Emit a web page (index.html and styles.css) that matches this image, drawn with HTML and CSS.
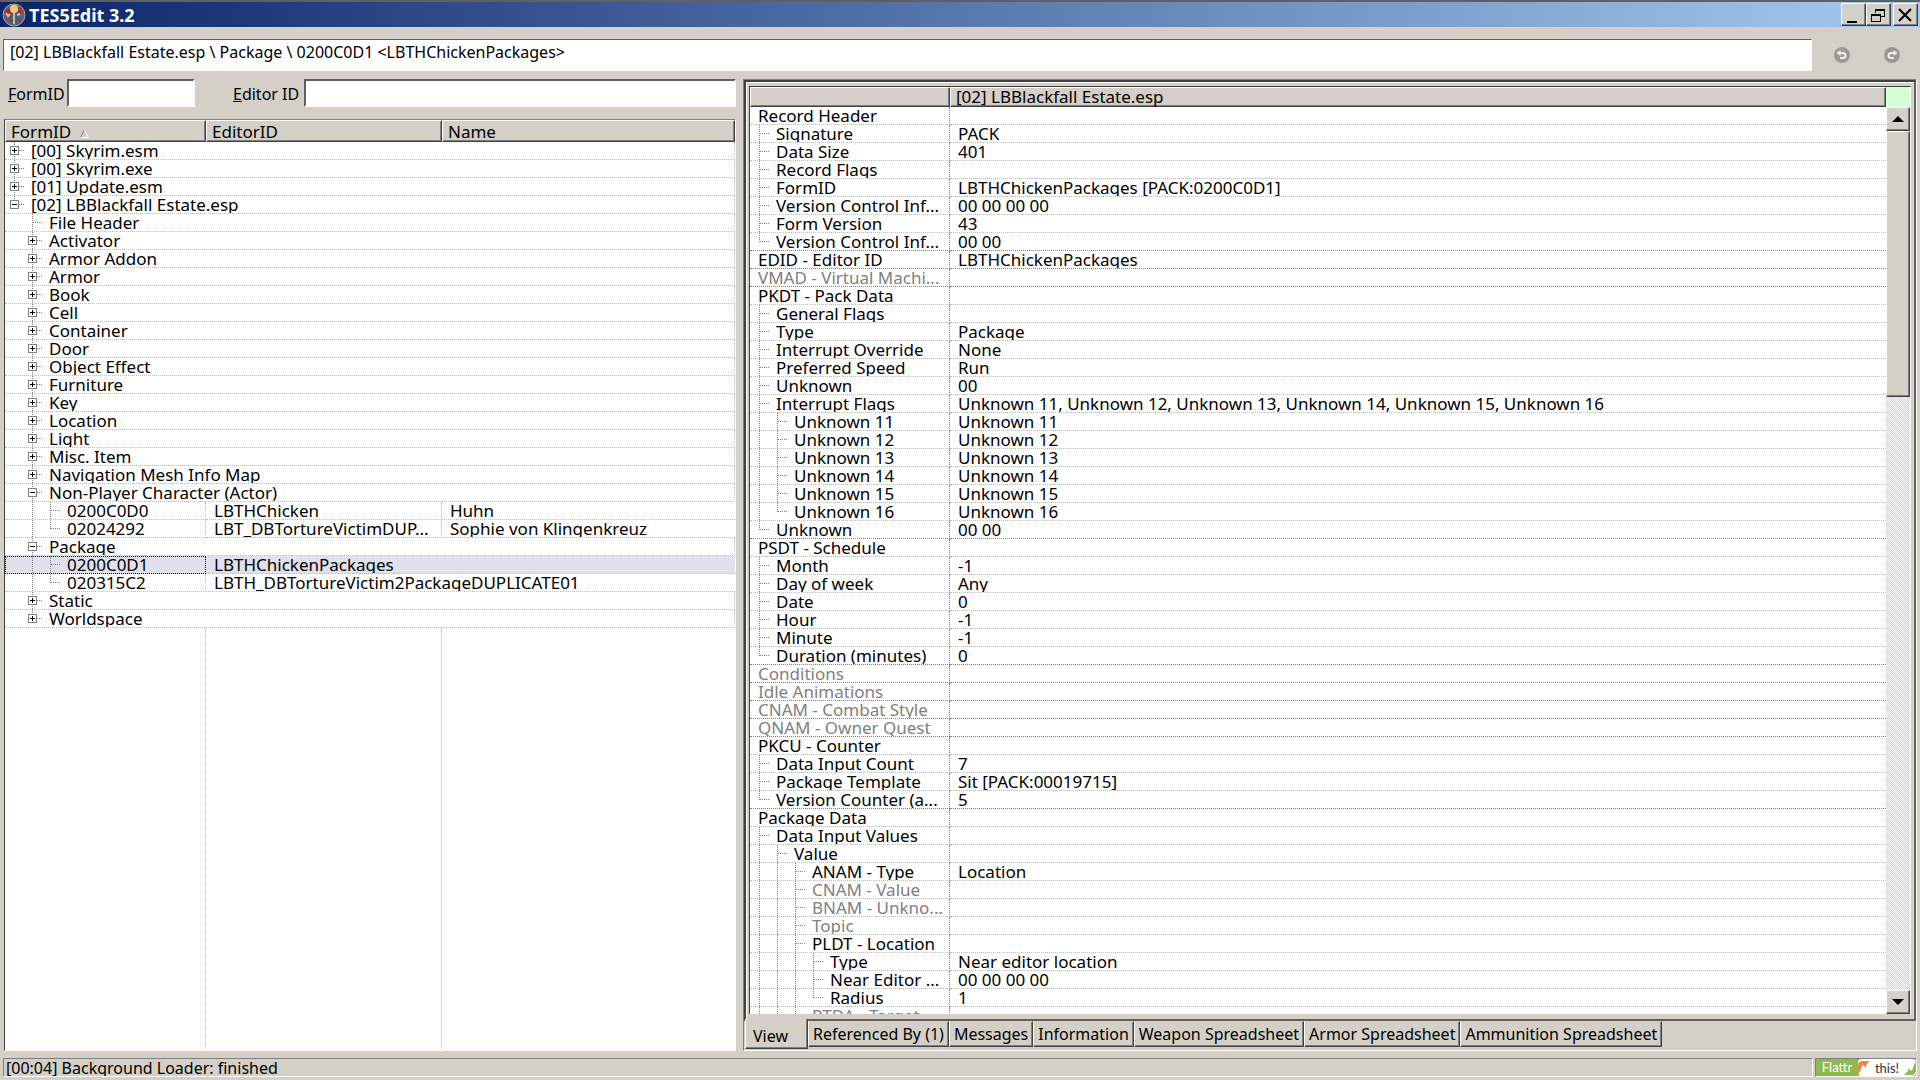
FILE: index.html
```html
<!DOCTYPE html>
<html lang="en">
<head>
    <meta charset="UTF-8">
    <meta name="viewport" content="width=device-width, initial-scale=1.0">
    <title>TES5Edit 3.2</title>
    <link rel="stylesheet" href="styles.css">
</head>
<body>
    <header class="titlebar">
        <svg class="app-icon" viewBox="0 0 24 24" aria-hidden="true">
            <circle cx="12" cy="12" r="11" fill="#5d6664" stroke="#a3a69b"/>
            <path d="M3 8l5-3 2 4-2 3 3 2-3 5-4-3z" fill="#b5222a"/>
            <path d="M14 6l5-1 2 5-4 2 3 3-2 4-4-2z" fill="#c02a2a"/>
            <path d="M3 12l4-1 2 4-3 3zM16 9l4 2-1 5-4-1z" fill="#3c6ea6"/>
            <path d="M9 10h6v11H9z" fill="#2f5f9c"/>
            <path d="M8 11l-2 2-2-3M15 12l3-1" stroke="#e0bd8d" stroke-width="2" fill="none"/>
            <circle cx="12" cy="6" r="4" fill="#e6c79a"/>
            <path d="M8 5c0-3 6-5 8-1l-3 0-4 2z" fill="#e2cf58"/>
            <path d="M12 10v11" stroke="#d9c65a" stroke-width="2"/>
        </svg>
        <h1>TES5Edit 3.2</h1>
        <div class="window-buttons">
            <button type="button" aria-label="Minimize">
                <svg viewBox="0 0 20 18"><path d="M4 15h10v2H4z"/></svg>
            </button>
            <button type="button" aria-label="Restore">
                <svg viewBox="0 0 20 18"><path d="M7 3h10v8h-4v-1h3V5H8v2H7zM3 8h10v8H3zM4 10v5h8v-5z" fill-rule="evenodd"/></svg>
            </button>
            <button type="button" class="close" aria-label="Close">
                <svg viewBox="0 0 20 18"><path d="M4 3l12 12M16 3L4 15" stroke="#000" stroke-width="2"/></svg>
            </button>
        </div>
    </header>

    <div class="path-bar">
        <input type="text" aria-label="Path" readonly value="[02] LBBlackfall Estate.esp \ Package \ 0200C0D1 &lt;LBTHChickenPackages&gt;">
        <button type="button" class="nav-button" aria-label="Back">
            <svg viewBox="0 0 16 16"><circle cx="8" cy="8" r="8" fill="#999"/><path d="M5 6h4a2.500 2.500 0 0 1 0 5H6" stroke="#eee" stroke-width="2" fill="none"/><path d="M2.500 6L6.500 3v6z" fill="#eee"/></svg>
        </button>
        <button type="button" class="nav-button" aria-label="Forward">
            <svg viewBox="0 0 16 16"><circle cx="8" cy="8" r="8" fill="#999"/><path d="M11 6H7a2.500 2.500 0 0 0 0 5h3" stroke="#eee" stroke-width="2" fill="none"/><path d="M13.500 6L9.500 3v6z" fill="#eee"/></svg>
        </button>
    </div>

    <main class="panes">
        <section class="nav-pane">
            <form class="search">
                <label for="form-id"><u>F</u>ormID</label>
                <input type="text" id="form-id" class="form-id">
                <label for="editor-id" class="editor-label"><u>E</u>ditor ID</label>
                <input type="text" id="editor-id" class="editor-id">
            </form>
            <div class="tree nav-tree">
                <table>
                    <colgroup><col class="col-form"><col class="col-editor"><col></colgroup>
                    <thead>
                        <tr>
                            <th>FormID <svg class="sort" viewBox="0 0 9 9"><path d="M4.500 0.500L0.500 8.500" stroke="#808080"/><path d="M4.500 0.500l4 8h-8" stroke="#fff" fill="none"/></svg></th>
                            <th>EditorID</th>
                            <th>Name</th>
                        </tr>
                    </thead>
                    <tbody id="nav-rows"></tbody>
                </table>
                <div class="empty"><span></span><span></span></div>
            </div>
        </section>

        <section class="view-pane">
            <div class="page">
                <div class="tree record-tree">
                    <table>
                        <colgroup><col class="col-label"><col></colgroup>
                        <thead>
                            <tr><th></th><th>[02] LBBlackfall Estate.esp</th></tr>
                        </thead>
                        <tbody id="record-rows"></tbody>
                    </table>
                </div>
                <div class="scroll">
                    <div class="corner"></div>
                    <button type="button" aria-label="Scroll up"><svg viewBox="0 0 12 6"><path d="M6 0l6 6H0z"/></svg></button>
                    <div class="track"><div class="thumb"></div></div>
                    <button type="button" aria-label="Scroll down"><svg viewBox="0 0 12 6"><path d="M0 0h12L6 6z"/></svg></button>
                </div>
            </div>
            <nav class="tabs">
                <button type="button" class="active">View</button>
                <button type="button">Referenced By (1)</button>
                <button type="button">Messages</button>
                <button type="button">Information</button>
                <button type="button">Weapon Spreadsheet</button>
                <button type="button">Armor Spreadsheet</button>
                <button type="button">Ammunition Spreadsheet</button>
            </nav>
        </section>
    </main>

    <footer class="statusbar">
        <div class="status">[00:04] Background Loader: finished</div>
        <a href="#" class="flattr">
            <span class="flattr-name">Flattr</span>
            <span class="flattr-this">
                <svg viewBox="0 0 12 14"><path d="M0 14V5Q0 0 5 0h7L8 4v3L5 4Q3 5 3 8z" fill="#f0883a"/></svg>
                this!
                <svg viewBox="0 0 12 14"><path d="M12 0v9q0 5-5 5H0l4-4V7l3 3q2-1 2-4z" fill="#8db94f"/></svg>
            </span>
        </a>
    </footer>

    <script>
        // level, state (+ closed, - open, . leaf), FormID, EditorID, Name
        const navRows = [
            [0, '+', '[00] Skyrim.esm'],
            [0, '+', '[00] Skyrim.exe'],
            [0, '+', '[01] Update.esm'],
            [0, '-', '[02] LBBlackfall Estate.esp'],
            [1, '.', 'File Header'],
            [1, '+', 'Activator'],
            [1, '+', 'Armor Addon'],
            [1, '+', 'Armor'],
            [1, '+', 'Book'],
            [1, '+', 'Cell'],
            [1, '+', 'Container'],
            [1, '+', 'Door'],
            [1, '+', 'Object Effect'],
            [1, '+', 'Furniture'],
            [1, '+', 'Key'],
            [1, '+', 'Location'],
            [1, '+', 'Light'],
            [1, '+', 'Misc. Item'],
            [1, '+', 'Navigation Mesh Info Map'],
            [1, '-', 'Non-Player Character (Actor)'],
            [2, '.', '0200C0D0', 'LBTHChicken', 'Huhn'],
            [2, '.', '02024292', 'LBT_DBTortureVictimDUP...', 'Sophie von Klingenkreuz'],
            [1, '-', 'Package'],
            [2, '.', '0200C0D1', 'LBTHChickenPackages'],
            [2, '.', '020315C2', 'LBTH_DBTortureVictim2PackageDUPLICATE01'],
            [1, '+', 'Static'],
            [1, '+', 'Worldspace']
        ];
        const selected = '0200C0D1';

        // level, label, value, unset
        const recordRows = [
            [0, 'Record Header'],
            [1, 'Signature', 'PACK'],
            [1, 'Data Size', '401'],
            [1, 'Record Flags'],
            [1, 'FormID', 'LBTHChickenPackages [PACK:0200C0D1]'],
            [1, 'Version Control Inf...', '00 00 00 00'],
            [1, 'Form Version', '43'],
            [1, 'Version Control Inf...', '00 00'],
            [0, 'EDID - Editor ID', 'LBTHChickenPackages'],
            [0, 'VMAD - Virtual Machi...', '', true],
            [0, 'PKDT - Pack Data'],
            [1, 'General Flags'],
            [1, 'Type', 'Package'],
            [1, 'Interrupt Override', 'None'],
            [1, 'Preferred Speed', 'Run'],
            [1, 'Unknown', '00'],
            [1, 'Interrupt Flags', 'Unknown 11, Unknown 12, Unknown 13, Unknown 14, Unknown 15, Unknown 16'],
            [2, 'Unknown 11', 'Unknown 11'],
            [2, 'Unknown 12', 'Unknown 12'],
            [2, 'Unknown 13', 'Unknown 13'],
            [2, 'Unknown 14', 'Unknown 14'],
            [2, 'Unknown 15', 'Unknown 15'],
            [2, 'Unknown 16', 'Unknown 16'],
            [1, 'Unknown', '00 00'],
            [0, 'PSDT - Schedule'],
            [1, 'Month', '-1'],
            [1, 'Day of week', 'Any'],
            [1, 'Date', '0'],
            [1, 'Hour', '-1'],
            [1, 'Minute', '-1'],
            [1, 'Duration (minutes)', '0'],
            [0, 'Conditions', '', true],
            [0, 'Idle Animations', '', true],
            [0, 'CNAM - Combat Style', '', true],
            [0, 'QNAM - Owner Quest', '', true],
            [0, 'PKCU - Counter'],
            [1, 'Data Input Count', '7'],
            [1, 'Package Template', 'Sit [PACK:00019715]'],
            [1, 'Version Counter (a...', '5'],
            [0, 'Package Data'],
            [1, 'Data Input Values'],
            [2, 'Value'],
            [3, 'ANAM - Type', 'Location'],
            [3, 'CNAM - Value', '', true],
            [3, 'BNAM - Unkno...', '', true],
            [3, 'Topic', '', true],
            [3, 'PLDT - Location'],
            [4, 'Type', 'Near editor location'],
            [4, 'Near Editor ...', '00 00 00 00'],
            [4, 'Radius', '1'],
            [3, 'PTDA - Target', '', true]
        ];

        // is there another node on this level under the same parent?
        function hasNext(rows, index, level, openEnd) {
            for (let i = index + 1; i < rows.length; i++) {
                if (rows[i][0] < level) return false;
                if (rows[i][0] === level) return true;
            }
            return openEnd;
        }

        function guides(rows, index, first, openEnd) {
            const level = rows[index][0];
            let html = '';
            for (let l = first; l <= level; l++) {
                const next = hasNext(rows, index, l, openEnd);
                let name = 'guide';
                if (next) name += ' line';
                else if (l === level) name += ' end';
                if (l === level) name += ' stub';
                html += `<span class="${name}"></span>`;
            }
            return html;
        }

        function renderNav() {
            document.getElementById('nav-rows').innerHTML = navRows.map((row, index) => {
                const [level, state, id, editor, name] = row;
                const box = state === '.' ? '' : `<span class="box ${state === '+' ? 'closed' : ''}"></span>`;
                const first = `<div class="cell">${guides(navRows, index, 0, false)}${box}<span class="text">${id}</span></div>`;
                if (!editor) return `<tr><td colspan="3" class="edge">${first}</td></tr>`;
                const rowClass = id === selected ? ' class="selected"' : '';
                const rest = name
                    ? `<td><div class="cell">${editor}</div></td><td><div class="cell">${name}</div></td>`
                    : `<td colspan="2"><div class="cell">${editor}</div></td>`;
                return `<tr${rowClass}><td>${first}</td>${rest}</tr>`;
            }).join('');
        }

        function renderRecord() {
            document.getElementById('record-rows').innerHTML = recordRows.map((row, index) => {
                const [level, label, value, unset] = row;
                const next = recordRows[index + 1];
                const names = [];
                if (next && next[0] === 0) names.push('section-end');
                if (unset) names.push('unset');
                return `<tr class="${names.join(' ')}">
                    <td><div class="cell">${guides(recordRows, index, 1, true)}<span class="text">${label}</span></div></td>
                    <td><div class="cell">${value || ''}</div></td>
                </tr>`;
            }).join('');
        }

        renderNav();
        renderRecord();
    </script>
</body>
</html>
```
FILE: styles.css
```css
* {
    margin: 0;
    padding: 0;
    box-sizing: border-box;
}

body {
    font-family: Tahoma, "Noto Sans", sans-serif;
    font-size: 16px;
    background-color: #d4d0c8;
    color: #000;
    display: flex;
    flex-direction: column;
    height: 100vh;
    overflow: hidden;
}

button, input {
    font: inherit;
    color: inherit;
    border-radius: 0;
}

input {
    background-color: #fff;
    border: 2px solid;
    border-color: #606060 #fff #fff #606060;
    outline: none;
}

/* Title bar */
.titlebar {
    display: flex;
    align-items: center;
    height: 27px;
    border-top: 2px solid #606060;
    padding: 0 2px;
    background: linear-gradient(90deg, #0a246a, #a6caf0);
}

.app-icon {
    width: 24px;
    height: 24px;
    margin-right: 3px;
}

.titlebar h1 {
    color: #fff;
    font-size: 18px;
    line-height: 24px;
}

.window-buttons {
    display: flex;
    margin-left: auto;
}

.window-buttons button, .scroll button, .thumb {
    width: 25px;
    height: 23px;
    background-color: #d4d0c8;
    border: 1px solid;
    border-color: #fff #404040 #404040 #fff;
    box-shadow: inset -1px -1px #808080;
}

.window-buttons button svg {
    display: block;
    width: 20px;
    height: 18px;
    margin-left: 1px;
}

.window-buttons .close {
    margin-left: 2px;
}

/* Path */
.path-bar {
    display: flex;
    align-items: center;
    padding: 12px 20px 8px 3px;
}

.path-bar input {
    flex: 1;
    height: 32px;
    padding: 0 6px 6px;
    border-width: 1px;
    margin-right: 22px;
}

.nav-button {
    width: 16px;
    height: 16px;
    border: none;
    background: none;
}

.nav-button + .nav-button {
    margin-left: 34px;
}

.nav-button svg {
    display: block;
}

/* Panes */
.panes {
    flex: 1;
    min-height: 0;
    display: grid;
    grid-template-columns: 740fr 1180fr;
}

.nav-pane {
    display: flex;
    flex-direction: column;
    min-height: 0;
    padding: 0 4px;
}

.search {
    display: flex;
    align-items: flex-start;
    padding-left: 4px;
    margin-bottom: 12px;
}

.search input {
    height: 28px;
    padding: 0 4px;
}

.search label {
    width: 55px;
    height: 28px;
    line-height: 30px;
    white-space: nowrap;
}

.search .form-id {
    width: 128px;
    margin-left: 4px;
}

.search .editor-label {
    width: 67px;
    margin-left: 38px;
}

.search .editor-id {
    flex: 1;
    margin-left: 4px;
}

.tree {
    font-size: 17px;
    background-color: #fff;
    overflow: hidden;
    display: flex;
    flex-direction: column;
    flex: 1;
    min-height: 0;
}

.nav-tree {
    border: 1px solid;
    border-color: #808080 #fff #fff #404040;
}

table {
    table-layout: fixed;
    border-collapse: separate;
    border-spacing: 0;
    width: 100%;
}

.col-form {
    width: 201px;
}

.col-editor {
    width: 236px;
}

.col-label {
    width: 200px;
}

th {
    height: 22px;
    padding: 2px 5px 0;
    font-weight: normal;
    line-height: 18px;
    text-align: left;
    white-space: nowrap;
    background-color: #d4d0c8;
    border: 1px solid;
    border-color: #fff #404040 #404040 #fff;
    box-shadow: inset -1px -1px #808080;
}

.sort {
    width: 9px;
    height: 9px;
    margin-left: 4px;
}

td {
    height: 18px;
    border-bottom: 1px dotted #c0bcb4;
}

.cell {
    display: flex;
    height: 17px;
    line-height: 18px;
    overflow: hidden;
    white-space: pre;
}

.guide {
    position: relative;
    flex: 0 0 18px;
    height: 18px;
}

.line, .end {
    background: repeating-linear-gradient(#808080 0 1px, transparent 1px 2px) 9px 0 / 1px 18px no-repeat;
}

.end {
    background-size: 1px 9px;
}

.stub::after {
    content: "";
    position: absolute;
    left: 9px;
    top: 8px;
    width: 10px;
    border-top: 1px dotted #808080;
}

/* Left tree */
.nav-tree td + td .cell {
    padding-left: 8px;
}

.nav-tree td:not(:last-child), .nav-tree .edge {
    border-right: 1px dotted #c0bcb4;
}

.nav-tree .text {
    padding-left: 8px;
}

.box {
    position: relative;
    width: 9px;
    height: 9px;
    margin: 4px 4px 0 -13px;
    background: linear-gradient(#000, #000) center / 5px 1px no-repeat, #fff;
    border: 1px solid #808080;
}

.closed::after {
    content: "";
    position: absolute;
    left: 3px;
    top: 1px;
    width: 1px;
    height: 5px;
    background-color: #000;
}

.selected td {
    background-color: #dfe1ec;
}

.selected td:first-child {
    outline: 1px dotted #000;
    outline-offset: -1px;
}

.empty {
    flex: 1;
    display: flex;
}

.empty span {
    width: 201px;
    border-right: 1px dotted #c0bcb4;
}

.empty span + span {
    width: 236px;
}

/* Right pane */
.view-pane {
    display: flex;
    flex-direction: column;
    min-height: 0;
    margin: 0 3px;
    border: 1px solid;
    border-color: #808080 #fff #fff #808080;
}

.page {
    flex: 1;
    display: flex;
    min-height: 0;
    padding: 4px 3px 5px 3px;
    border: 2px solid;
    border-color: #404040 #606060 #606060 #404040;
    box-shadow: inset 1px 1px #fff;
}

.record-tree {
    border-top: 1px solid #404040;
    border-left: 1px solid #404040;
}

.record-tree th {
    height: 20px;
    padding-top: 0;
}

.record-tree .text {
    padding-left: 8px;
}

.record-tree td:first-child {
    border-right: 1px dotted #808080;
}

.record-tree td + td .cell {
    padding-left: 8px;
}

.section-end td {
    border-bottom-color: #808080;
}

.unset {
    color: #808080;
}

.scroll {
    width: 25px;
    display: flex;
    flex-direction: column;
    border-top: 1px solid #404040;
    border-right: 1px solid #fff;
}

.corner {
    height: 20px;
    background-color: #d5ffd5;
}

.scroll button {
    width: 24px;
    height: 24px;
    display: flex;
    align-items: center;
    justify-content: center;
}

.scroll svg {
    width: 12px;
    height: 6px;
}

.track {
    flex: 1;
    background: conic-gradient(#fff 25%, #d4d0c8 0 50%, #fff 0 75%, #d4d0c8 0) 0 0 / 2px 2px;
}

.thumb {
    width: 24px;
    height: 31%;
}

.tabs {
    display: flex;
    align-items: flex-start;
    height: 29px;
    padding-left: 1px;
}

.tabs button {
    height: 26px;
    padding: 0 4px;
    line-height: 22px;
    white-space: nowrap;
    background-color: #d4d0c8;
    border: 1px solid;
    border-color: #d4d0c8 #404040 #404040 #fff;
    box-shadow: inset -1px -1px #808080;
}

.tabs .active {
    position: relative;
    width: 63px;
    height: 30px;
    margin: -2px 0 0;
    padding: 4px 0 0 7px;
    text-align: left;
    border-top: none;
}

/* Status bar */
.statusbar {
    display: flex;
    gap: 2px;
    padding: 7px 3px 3px;
    line-height: 18px;
}

.status {
    flex: 1;
    height: 19px;
    padding-left: 2px;
    overflow: hidden;
    border: 1px solid;
    border-color: #808080 #fff #fff #808080;
}

.flattr {
    display: flex;
    height: 19px;
    width: 102px;
    color: #fff;
    font-family: Lato, sans-serif;
    font-size: 13px;
    line-height: 16px;
    text-decoration: none;
    background-color: #8db94f;
    border: 1px solid;
    border-color: #808080 #fff #fff #808080;
}

.flattr-name {
    width: 42px;
    text-align: center;
}

.flattr-this {
    flex: 1;
    display: flex;
    align-items: center;
    justify-content: space-between;
    color: #333;
    background-color: #fff;
    border-radius: 4px;
}

.flattr-this svg {
    width: 12px;
    height: 14px;
}
```
